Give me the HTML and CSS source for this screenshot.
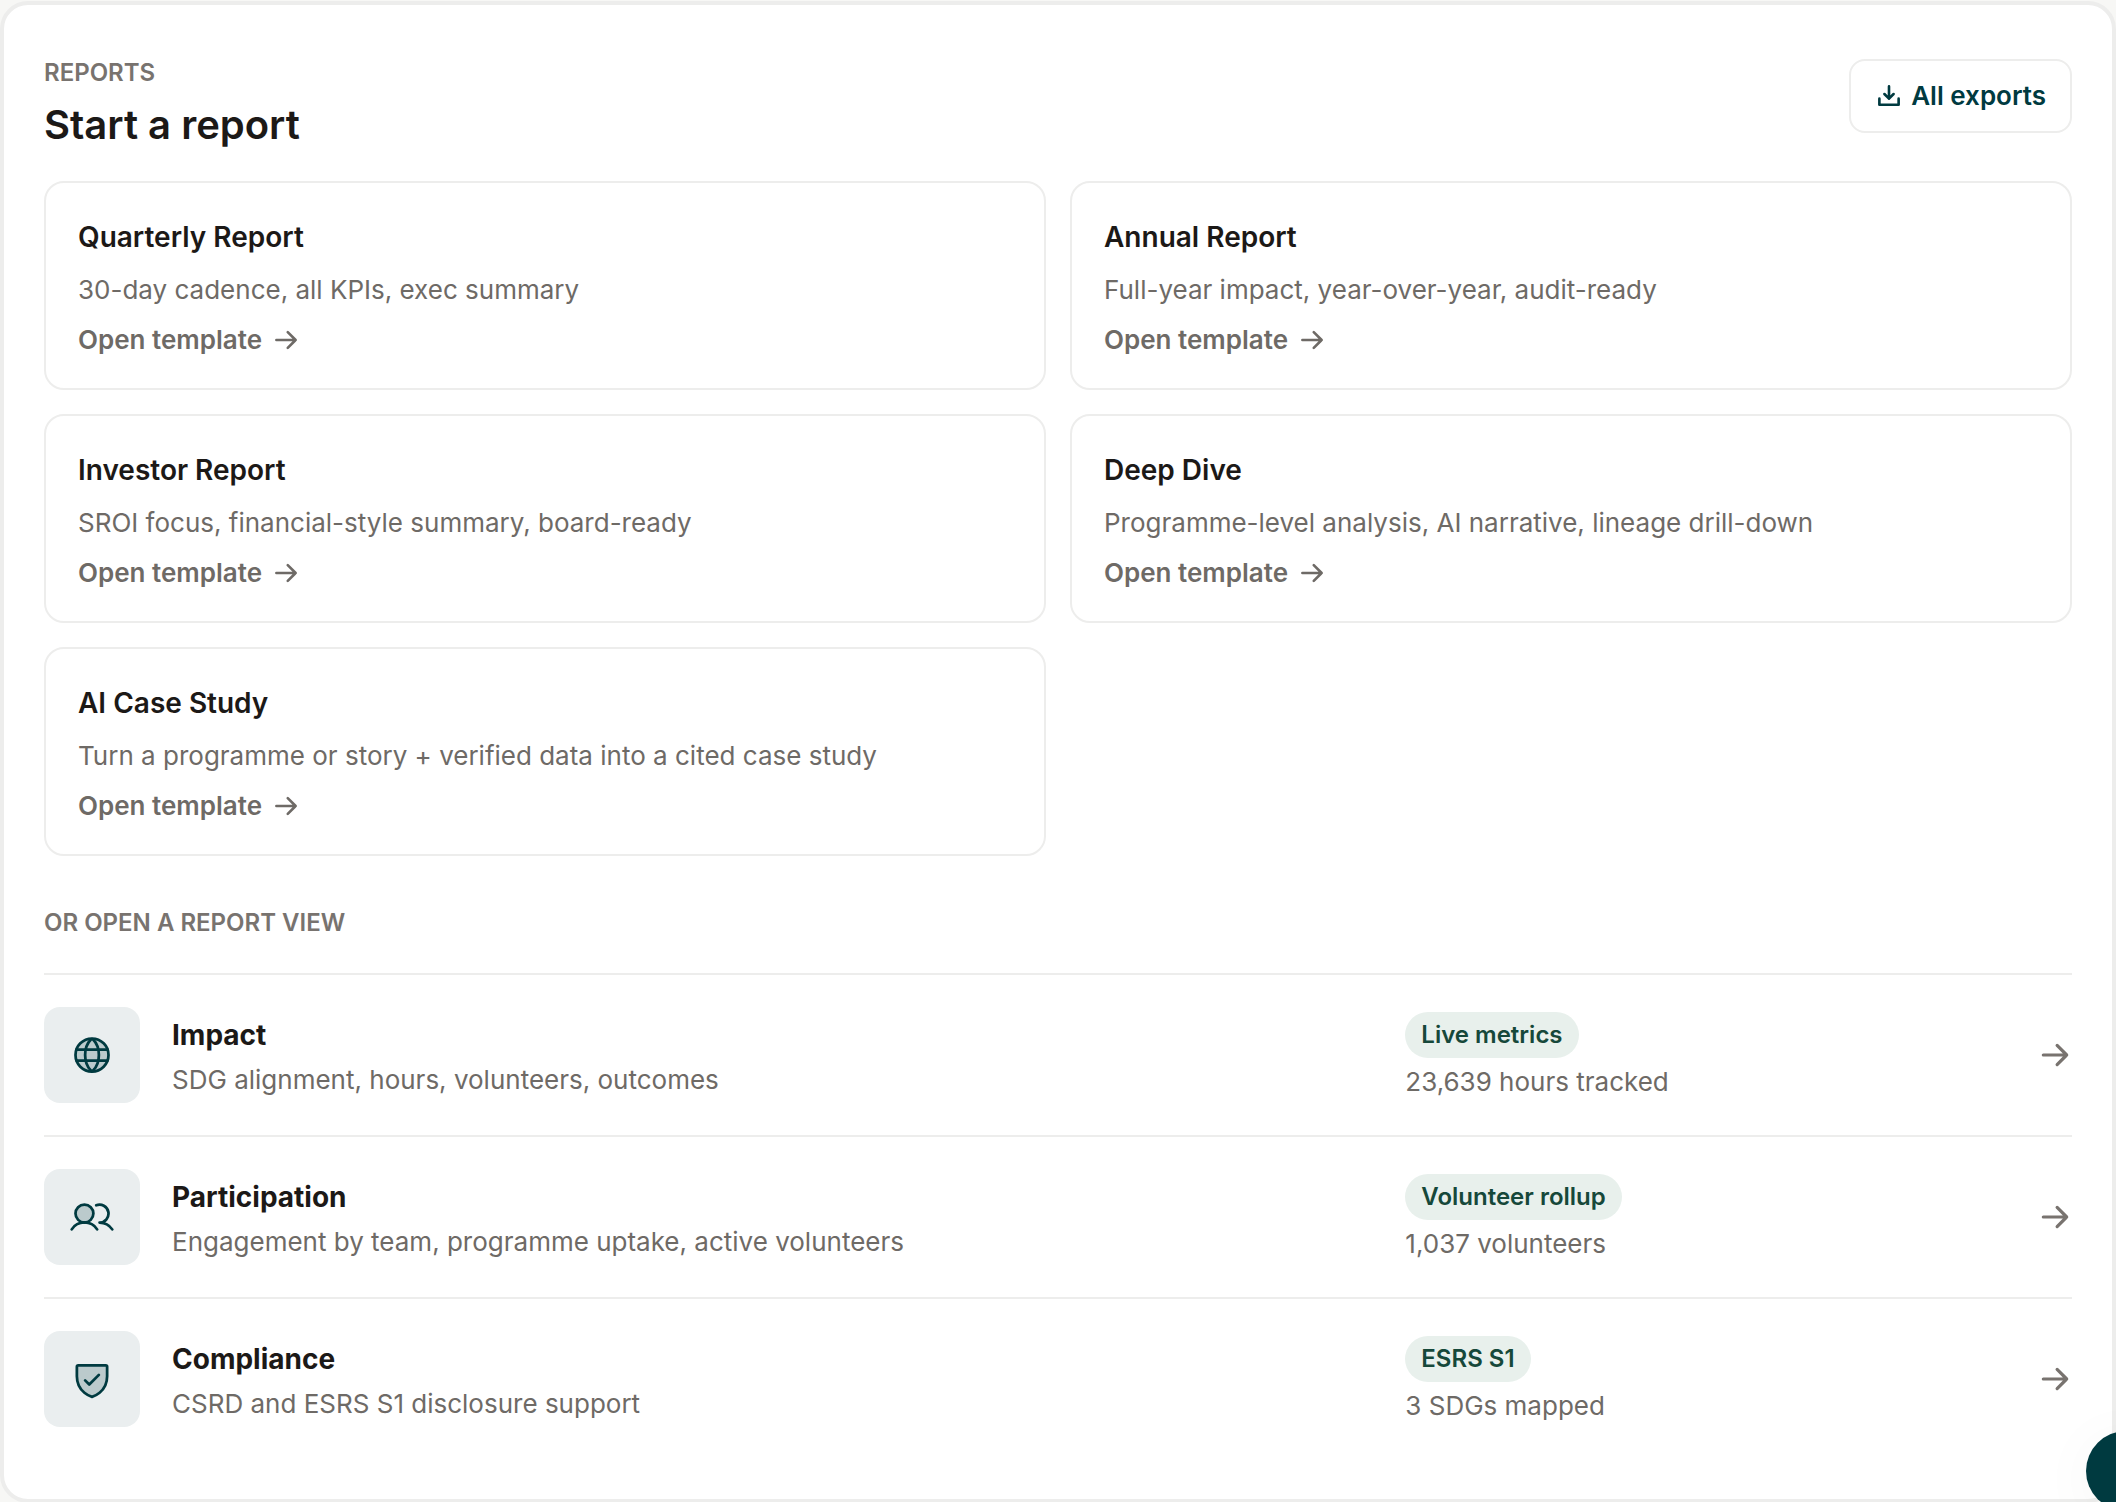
FILE: index.html
```html
<!DOCTYPE html>
<html lang="en">
<head>
    <meta charset="UTF-8">
    <meta name="viewport" content="width=device-width, initial-scale=1.0">
    <title>Reports</title>
    <link rel="stylesheet" href="styles.css">
</head>
<body>
    <!-- Shared icons -->
    <svg class="sprite" aria-hidden="true">
        <symbol id="arrow" viewBox="0 0 256 256">
            <path d="M40 128H216M144 56l72 72-72 72"/>
        </symbol>
    </svg>

    <main class="panel">
        <header class="panel-header">
            <div>
                <p class="eyebrow">REPORTS</p>
                <h1>Start a report</h1>
            </div>
            <button type="button" class="export-btn">
                <svg class="icon icon-sm" viewBox="0 0 256 256" aria-hidden="true">
                    <path d="M86 110l42 42 42-42M128 40V152M216 152V208H40V152"/>
                </svg>
                All exports
            </button>
        </header>

        <!-- Templates -->
        <section class="templates">
            <a href="#quarterly" class="template">
                <h2>Quarterly Report</h2>
                <p>30-day cadence, all KPIs, exec summary</p>
                <span class="open">Open template <svg class="icon icon-sm"><use href="#arrow"/></svg></span>
            </a>
            <a href="#annual" class="template">
                <h2>Annual Report</h2>
                <p>Full-year impact, year-over-year, audit-ready</p>
                <span class="open">Open template <svg class="icon icon-sm"><use href="#arrow"/></svg></span>
            </a>
            <a href="#investor" class="template">
                <h2>Investor Report</h2>
                <p>SROI focus, financial-style summary, board-ready</p>
                <span class="open">Open template <svg class="icon icon-sm"><use href="#arrow"/></svg></span>
            </a>
            <a href="#deep-dive" class="template">
                <h2>Deep Dive</h2>
                <p>Programme-level analysis, AI narrative, lineage drill-down</p>
                <span class="open">Open template <svg class="icon icon-sm"><use href="#arrow"/></svg></span>
            </a>
            <a href="#case-study" class="template">
                <h2>AI Case Study</h2>
                <p>Turn a programme or story + verified data into a cited case study</p>
                <span class="open">Open template <svg class="icon icon-sm"><use href="#arrow"/></svg></span>
            </a>
        </section>

        <!-- Report views -->
        <section class="views">
            <p class="eyebrow">OR OPEN A REPORT VIEW</p>
            <a href="#impact" class="view">
                <span class="tile">
                    <svg class="duotone" viewBox="0 0 256 256" aria-hidden="true">
                        <circle class="fill" cx="128" cy="128" r="96"/>
                        <circle cx="128" cy="128" r="96"/>
                        <path d="M88 128c0 37.46 13.33 70.19 33.58 90.27a8.93 8.93 0 0 0 12.84 0C154.67 198.19 168 165.46 168 128s-13.33-70.19-33.58-90.27a8.93 8.93 0 0 0-12.84 0C101.33 57.81 88 90.54 88 128Z"/>
                        <path d="M37.5 96H218.5M37.5 160H218.5"/>
                    </svg>
                </span>
                <span class="view-text">
                    <strong>Impact</strong>
                    <span>SDG alignment, hours, volunteers, outcomes</span>
                </span>
                <span class="view-meta">
                    <span class="badge">Live metrics</span>
                    <span>23,639 hours tracked</span>
                </span>
                <svg class="icon icon-md"><use href="#arrow"/></svg>
            </a>
            <a href="#participation" class="view">
                <span class="tile">
                    <svg class="duotone" viewBox="0 0 256 256" aria-hidden="true">
                        <circle class="fill" cx="84" cy="108" r="52"/>
                        <circle cx="84" cy="108" r="52"/>
                        <path d="M10.23 200a88 88 0 0 1 147.54 0M172 160a87.93 87.93 0 0 1 73.77 40M152.69 59.7A52 52 0 1 1 172 160"/>
                    </svg>
                </span>
                <span class="view-text">
                    <strong>Participation</strong>
                    <span>Engagement by team, programme uptake, active volunteers</span>
                </span>
                <span class="view-meta">
                    <span class="badge">Volunteer rollup</span>
                    <span>1,037 volunteers</span>
                </span>
                <svg class="icon icon-md"><use href="#arrow"/></svg>
            </a>
            <a href="#compliance" class="view">
                <span class="tile">
                    <svg class="duotone" viewBox="0 0 256 256" aria-hidden="true">
                        <path class="fill" d="M216 112V56a8 8 0 0 0-8-8H48a8 8 0 0 0-8 8v56c0 96 88 120 88 120S216 208 216 112Z"/>
                        <path d="M216 112V56a8 8 0 0 0-8-8H48a8 8 0 0 0-8 8v56c0 96 88 120 88 120S216 208 216 112Z"/>
                        <path d="M88 136l24 24 56-56"/>
                    </svg>
                </span>
                <span class="view-text">
                    <strong>Compliance</strong>
                    <span>CSRD and ESRS S1 disclosure support</span>
                </span>
                <span class="view-meta">
                    <span class="badge">ESRS S1</span>
                    <span>3 SDGs mapped</span>
                </span>
                <svg class="icon icon-md"><use href="#arrow"/></svg>
            </a>
        </section>
    </main>

    <button type="button" class="fab" aria-label="Help"></button>
</body>
</html>
```
FILE: styles.css
```css
* {
    box-sizing: border-box;
}

body {
    margin: 0;
    padding-top: 1px;
    background-color: #f7f7f5;
    color: #1c1917;
    font-family: Inter, sans-serif;
    font-size: 26px;
    line-height: 40px;
    font-optical-sizing: none;
    overflow: hidden;
}

h1,
h2,
p {
    margin: 0;
}

a {
    color: inherit;
    text-decoration: none;
}

.sprite {
    display: none;
}

.panel {
    padding: 54px 40px 40px;
    background-color: #ffffff;
    border: 4px solid #ededec;
    border-radius: 28px;
}

.panel-header {
    display: flex;
    justify-content: space-between;
    align-items: flex-start;
    margin-bottom: 30px;
}

.eyebrow {
    color: #78736f;
    font-size: 24px;
    font-weight: 600;
    line-height: 28px;
}

h1 {
    margin-top: 12px;
    font-size: 40px;
    font-weight: 600;
    line-height: 52px;
}

.export-btn {
    display: flex;
    align-items: center;
    gap: 8px;
    height: 74px;
    padding: 0 24px;
    background-color: #ffffff;
    border: 2px solid #ededec;
    border-radius: 16px;
    color: #003a40;
    font: inherit;
    font-weight: 600;
    cursor: pointer;
}

.icon,
.duotone {
    fill: none;
    stroke: currentColor;
    stroke-linecap: round;
    stroke-linejoin: round;
}

.icon {
    stroke-width: 24;
}

.icon-sm {
    width: 28px;
    height: 28px;
}

.icon-md {
    width: 34px;
    height: 34px;
    color: #78736f;
}

.duotone {
    width: 44px;
    height: 44px;
    stroke-width: 16;
}

.duotone .fill {
    fill: currentColor;
    stroke: none;
    opacity: 0.2;
}

/* Template cards */
.templates {
    display: grid;
    grid-template-columns: 1fr 1fr;
    gap: 24px;
}

.template {
    padding: 32px;
    border: 2px solid #ededec;
    border-radius: 20px;
}

.template h2 {
    font-size: 28px;
    font-weight: 600;
    line-height: 44px;
}

.template p {
    margin: 11px 0 13px;
    color: #6e6a66;
}

.open {
    display: flex;
    align-items: center;
    gap: 10px;
    color: #6e6a66;
    font-weight: 600;
    line-height: 33px;
}

/* Report views */
.views .eyebrow {
    margin: 53px 0 36px;
}

.view {
    display: grid;
    grid-template-columns: 96px 2fr 1fr 34px;
    align-items: center;
    gap: 32px;
    padding: 32px 0;
    border-top: 2px solid #ededec;
}

.tile {
    display: flex;
    align-items: center;
    justify-content: center;
    height: 96px;
    background-color: #eaeeef;
    border-radius: 16px;
    color: #003a40;
}

.view-text,
.view-meta {
    display: flex;
    flex-direction: column;
    align-items: flex-start;
    gap: 4px;
    padding-top: 4px;
    color: #6e6a66;
}

.view-text strong {
    color: #1c1917;
    font-size: 28px;
    font-weight: 700;
    line-height: 42px;
}

.badge {
    padding: 0 16px;
    background-color: #e8f0ec;
    border-radius: 24px;
    color: #16483a;
    font-size: 24px;
    font-weight: 600;
    line-height: 46px;
}

/* Floating button in the corner */
.fab {
    position: fixed;
    right: -50px;
    bottom: -9px;
    width: 80px;
    height: 80px;
    border: none;
    border-radius: 50%;
    background-color: #003a40;
    box-shadow: 0 8px 60px rgba(0, 0, 0, 0.04);
}
```
